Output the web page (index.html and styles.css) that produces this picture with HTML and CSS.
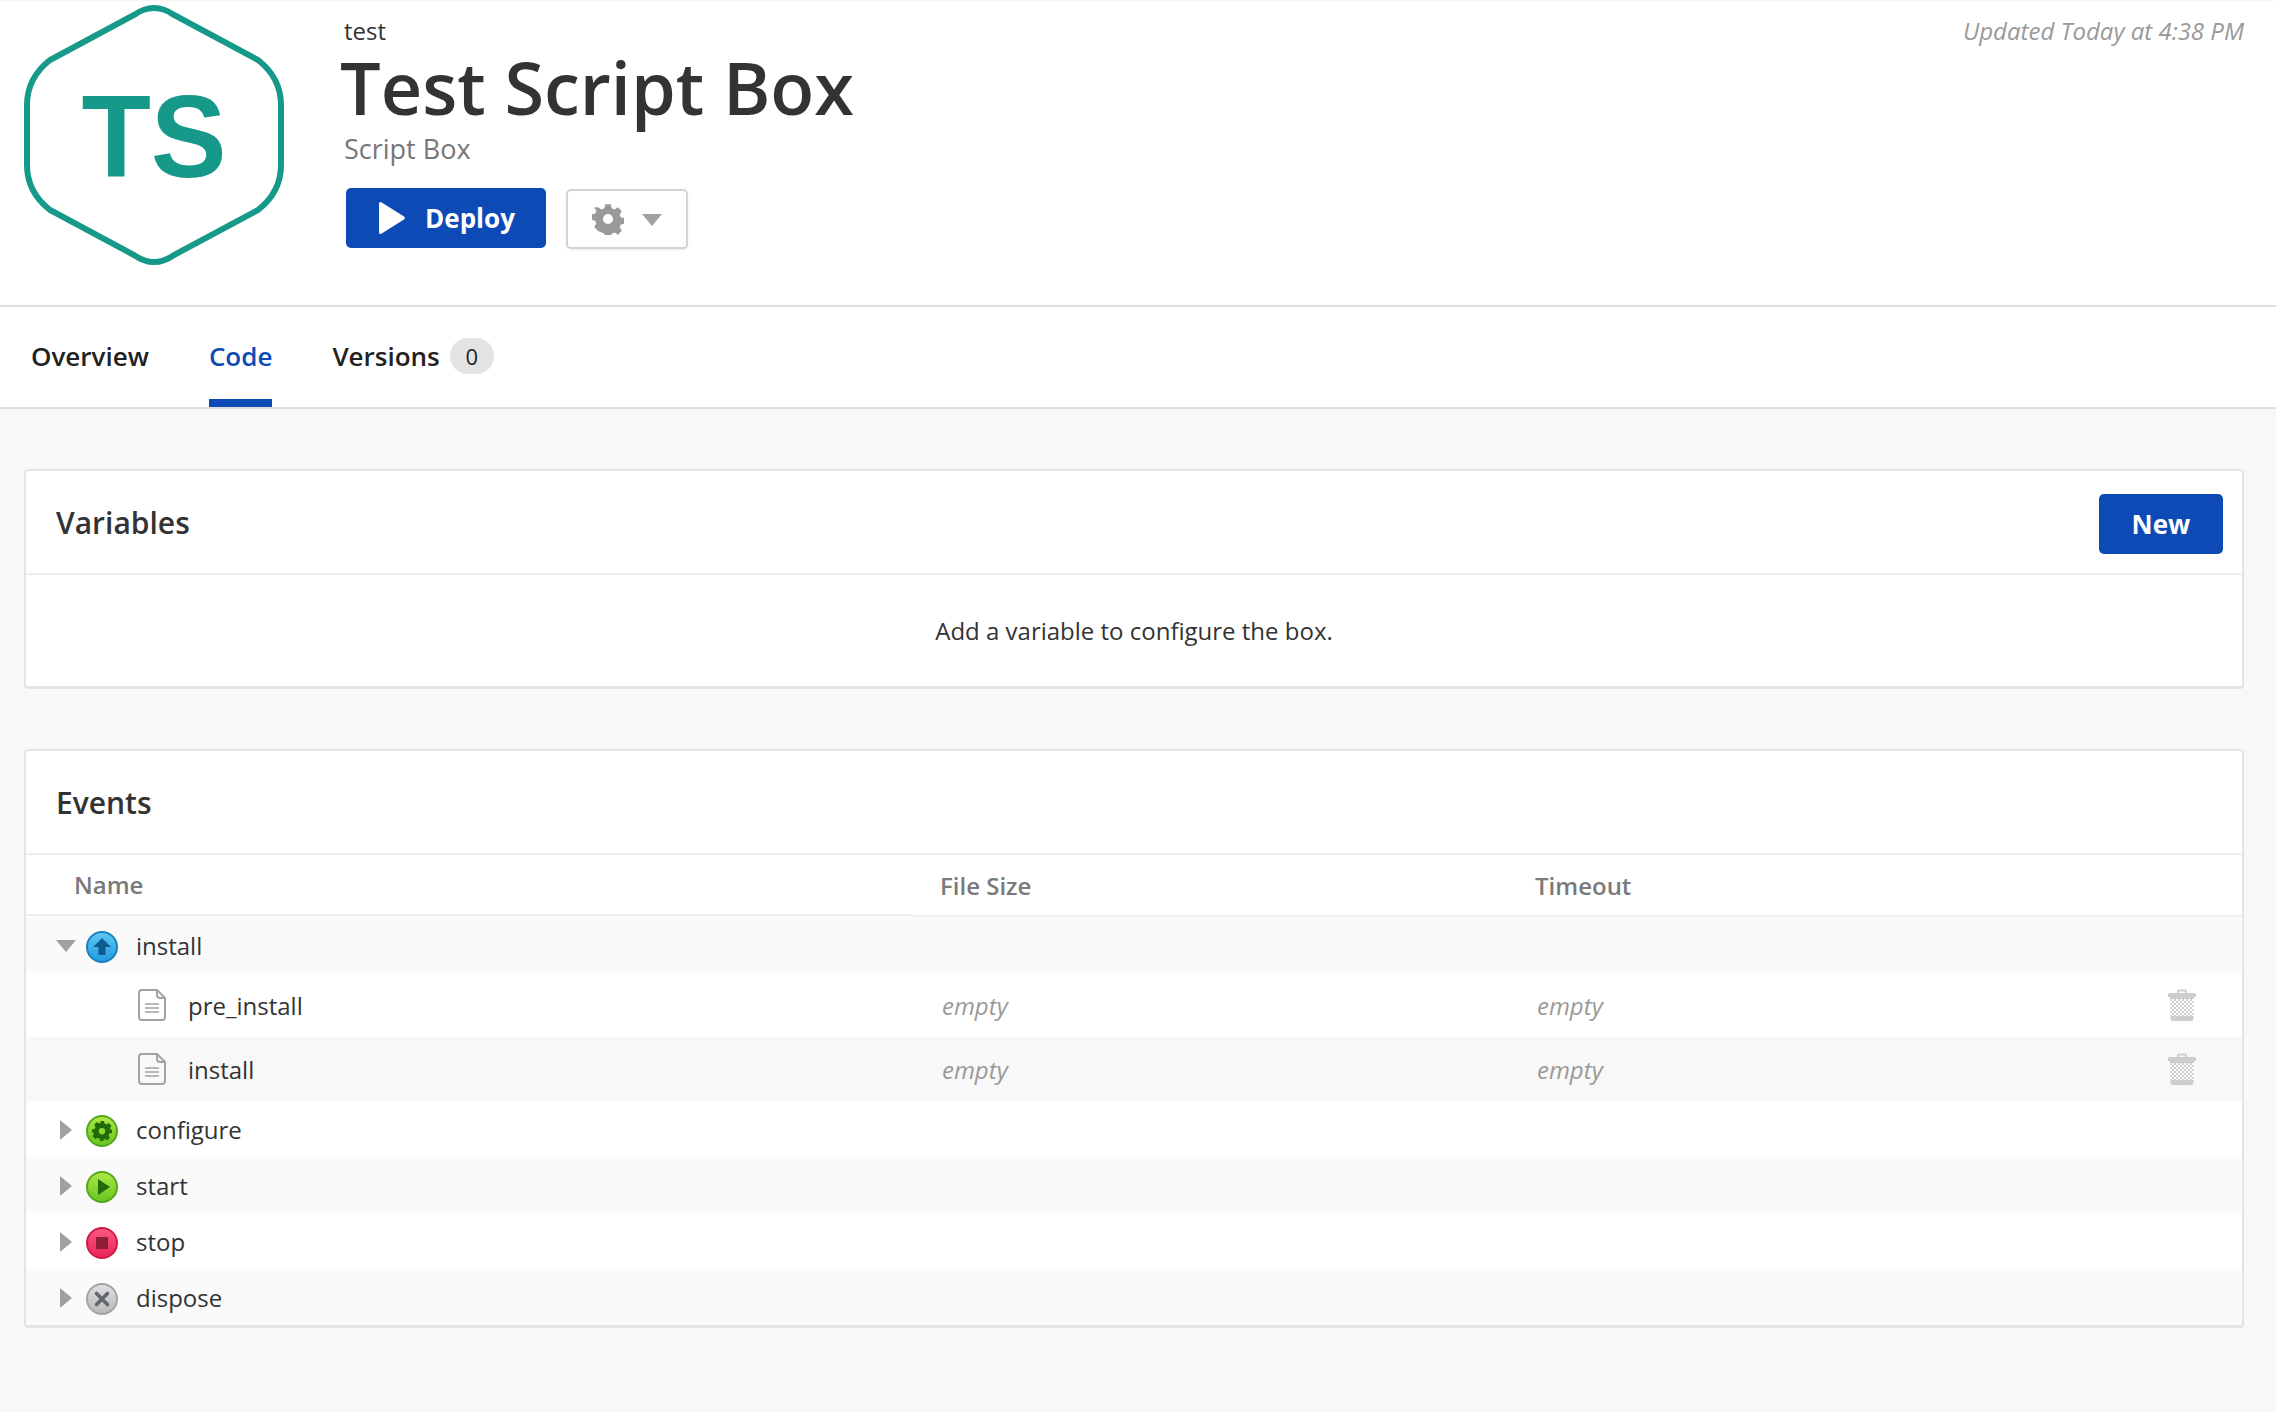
FILE: index.html
```html
<!DOCTYPE html>
<html lang="en">
<head>
<meta charset="utf-8">
<title>Test Script Box</title>
<link rel="stylesheet" href="styles.css">
</head>
<body>
<svg class="defs" width="0" height="0" aria-hidden="true">
  <defs>
    <linearGradient id="g-blue" x1="0" y1="0" x2="0" y2="1"><stop offset="0" stop-color="#62c8f4"/><stop offset="1" stop-color="#1f9ade"/></linearGradient>
    <linearGradient id="g-green" x1="0" y1="0" x2="0" y2="1"><stop offset="0" stop-color="#aee846"/><stop offset="1" stop-color="#66c41f"/></linearGradient>
    <linearGradient id="g-red" x1="0" y1="0" x2="0" y2="1"><stop offset="0" stop-color="#fa5a82"/><stop offset="1" stop-color="#ea2454"/></linearGradient>
    <linearGradient id="g-grey" x1="0" y1="0" x2="0" y2="1"><stop offset="0" stop-color="#e0e0e0"/><stop offset="1" stop-color="#b8b8b8"/></linearGradient>
    <pattern id="dither" width="4" height="4" patternUnits="userSpaceOnUse"><rect width="2" height="2" fill="#cdcdcd"/><rect x="2" y="2" width="2" height="2" fill="#cdcdcd"/></pattern>
    <symbol id="doc" viewBox="0 0 28 32"><path d="M4 1h15l8 8v19a3 3 0 0 1-3 3H4a3 3 0 0 1-3-3V4a3 3 0 0 1 3-3z" fill="none" stroke="#a3a3a3" stroke-width="2"/><path d="M19 1v5a3 3 0 0 0 3 3h5" fill="none" stroke="#a3a3a3" stroke-width="2"/><path d="M7 15h14M7 19h14M7 23h14" stroke="#a3a3a3" stroke-width="1.6"/></symbol>
    <symbol id="trash" viewBox="0 0 28 32"><path d="M9 4V2a1.500 1.500 0 0 1 1.500-1.500h7A1.500 1.500 0 0 1 19 2v2h7.500a1.500 1.500 0 0 1 1.500 1.500V8H0V5.500A1.500 1.500 0 0 1 1.500 4zM11 4h6V2.500h-6z" fill="#cdcdcd" fill-rule="evenodd"/><rect x="2" y="8" width="24" height="2" fill="#cdcdcd"/><rect x="2.500" y="10" width="23" height="18" fill="url(#dither)"/><path d="M2.500 27h23v3a2 2 0 0 1-2 2h-19a2 2 0 0 1-2-2z" fill="#cdcdcd"/></symbol>
    <symbol id="caret-right" viewBox="0 0 12 20"><path d="M0 0l12 10L0 20z" fill="#a0a0a0"/></symbol>
    <symbol id="caret-down" viewBox="0 0 20 12"><path d="M0 0h20L10 12z" fill="#a0a0a0"/></symbol>
  </defs>
</svg>

<header class="page-head">
  <svg class="logo" viewBox="0 0 308 270" width="308" height="270">
    <path class="logo-hex" d="M134 15Q154 1 174 15L258 60Q281 78 281 105V165Q281 192 258 210L174 255Q154 269 134 255L50 210Q27 192 27 165V105Q27 78 50 60z"/>
    <text class="logo-text" transform="translate(154 177) scale(.98 1)" text-anchor="middle">TS</text>
  </svg>
  <div class="head-main">
    <div class="crumb">test</div>
    <h1 class="title">Test Script Box</h1>
    <div class="subtitle">Script Box</div>
    <div class="actions">
      <button class="btn btn-deploy">
        <svg class="deploy-icon" viewBox="0 0 28 32" width="28" height="32"><path d="M2 1.500a1.500 1.500 0 0 1 2.300-1.200L27 14.500a2 2 0 0 1 0 3L4.300 31.700A1.500 1.500 0 0 1 2 30.500z" fill="#fff"/></svg>
        Deploy
      </button>
      <button class="btn-gear" aria-label="Settings">
        <svg viewBox="0 0 32 32" width="32" height="32"><path fill="#999" fill-rule="evenodd" d="M13 0h6l1 4.300 3 1.300 3.800-2.300 4.200 4.200-2.300 3.800 1.300 3 4 .7v6l-4 1-1.300 3 2.300 3.800-4.200 4.200-3.800-2.300-3 1.300-1 4h-6l-1-4-3-1.300L5.200 29.000 1 24.800l2.300-3.800-1.300-3L-2 17v-6l4-.7 1.300-3L1 3.500 5.200 3.300 9 5.600l3-1.300zM16 10.500a5.500 5.500 0 1 0 0 11 5.500 5.500 0 0 0 0-11z" transform="translate(1.300 1.300) scale(.92)"/></svg>
        <svg class="gear-caret" width="20" height="12"><use href="#caret-down"/></svg>
      </button>
    </div>
  </div>
  <div class="updated">Updated Today at 4:38 PM</div>
</header>

<nav class="tabs">
  <a class="tab">Overview</a>
  <a class="tab tab-active">Code</a>
  <a class="tab">Versions <span class="badge">0</span></a>
</nav>

<main class="content">
  <section class="card">
    <div class="card-head">
      <h2 class="card-title">Variables</h2>
      <button class="btn btn-new">New</button>
    </div>
    <div class="card-empty">Add a variable to configure the box.</div>
  </section>

  <section class="card">
    <div class="card-head">
      <h2 class="card-title">Events</h2>
    </div>
    <div class="table-head">
      <div class="th th-name">Name</div>
      <div class="th">File Size</div>
      <div class="th">Timeout</div>
    </div>

    <div class="row event alt">
      <svg class="caret-d" width="20" height="12"><use href="#caret-down"/></svg>
      <svg class="ev-icon" viewBox="0 0 32 32" width="32" height="32"><circle cx="16" cy="16" r="15" fill="url(#g-blue)" stroke="#1a80c0" stroke-width="2"/><path d="M16 7l9 9h-5.500v8h-7v-8H7z" fill="#0d5d8c"/></svg>
      <span class="ev-name">install</span>
    </div>
    <div class="row file">
      <div class="file-name"><svg class="doc" width="28" height="32"><use href="#doc"/></svg><span>pre_install</span></div>
      <div class="muted">empty</div>
      <div class="muted">empty</div>
      <svg class="trash" width="28" height="32"><use href="#trash"/></svg>
    </div>
    <div class="row file alt-2">
      <div class="file-name"><svg class="doc" width="28" height="32"><use href="#doc"/></svg><span>install</span></div>
      <div class="muted">empty</div>
      <div class="muted">empty</div>
      <svg class="trash" width="28" height="32"><use href="#trash"/></svg>
    </div>
    <div class="row event">
      <svg class="caret-r" width="12" height="20"><use href="#caret-right"/></svg>
      <svg class="ev-icon" viewBox="0 0 32 32" width="32" height="32"><circle cx="16" cy="16" r="15" fill="url(#g-green)" stroke="#55a81c" stroke-width="2"/><path fill="#1f6b09" fill-rule="evenodd" d="M14 6h4l.6 2.600 1.800.8 2.300-1.400 2.800 2.800-1.400 2.300.8 1.800L26 14.500v3.500l-2.700.6-.8 1.800 1.400 2.300-2.800 2.800-2.300-1.400-1.800.8L18 26h-4l-.6-2.500-1.800-.8-2.300 1.400-2.800-2.800 1.400-2.300-.8-1.800L6 18v-3.500l2.700-.6.8-1.800-1.400-2.300 2.800-2.800 2.300 1.400 1.800-.8zM16 13a3.200 3.200 0 1 0 0 6.400 3.200 3.200 0 0 0 0-6.400z"/></svg>
      <span class="ev-name">configure</span>
    </div>
    <div class="row event alt">
      <svg class="caret-r" width="12" height="20"><use href="#caret-right"/></svg>
      <svg class="ev-icon" viewBox="0 0 32 32" width="32" height="32"><circle cx="16" cy="16" r="15" fill="url(#g-green)" stroke="#55a81c" stroke-width="2"/><path d="M12 8l12 8-12 8z" fill="#1f6b09"/></svg>
      <span class="ev-name">start</span>
    </div>
    <div class="row event">
      <svg class="caret-r" width="12" height="20"><use href="#caret-right"/></svg>
      <svg class="ev-icon" viewBox="0 0 32 32" width="32" height="32"><circle cx="16" cy="16" r="15" fill="url(#g-red)" stroke="#d01a48" stroke-width="2"/><rect x="10" y="10" width="12" height="12" fill="#8e1f38"/></svg>
      <span class="ev-name">stop</span>
    </div>
    <div class="row event alt">
      <svg class="caret-r" width="12" height="20"><use href="#caret-right"/></svg>
      <svg class="ev-icon" viewBox="0 0 32 32" width="32" height="32"><circle cx="16" cy="16" r="15" fill="url(#g-grey)" stroke="#a4a4a4" stroke-width="2"/><path d="M10.500 10.500l11 11M21.500 10.500l-11 11" stroke="#62666e" stroke-width="3.600" stroke-linecap="round"/></svg>
      <span class="ev-name">dispose</span>
    </div>
  </section>
</main>
</body>
</html>
```

FILE: styles.css
```css
* { box-sizing: border-box; }
html, body { margin: 0; padding: 0; }
body {
  background: #f8f8f8;
  color: #333;
  font-family: "Open Sans", "Noto Sans", sans-serif;
  font-size: 24px;
  height: 1412px;
  overflow: hidden;
}
.defs { position: absolute; }

.page-head {
  display: flex;
  height: 307px;
  background: #fff;
  border-top: 1px solid #f6f6f6;
  border-bottom: 2px solid #dedede;
  padding-right: 32px;
}
.logo { display: block; flex: none; margin-top: -1px; margin-right: 32px; }
.logo-hex { fill: none; stroke: #17998a; stroke-width: 6; }
.logo-text { font-family: "Liberation Sans", Arial, sans-serif; font-weight: 700; font-size: 116px; fill: #17998a; }
.head-main { flex: 1; display: flex; flex-direction: column; align-items: flex-start; }
.crumb { font-size: 24px; line-height: 32px; margin-top: 14px; margin-left: 4px; color: #333; }
.title { margin: 1px 0 0; font-size: 72px; line-height: 78px; font-weight: 600; color: #333; }
.subtitle { font-size: 27px; line-height: 32px; margin-top: 7px; margin-left: 4px; color: #777; }
.actions { display: flex; align-items: flex-start; margin-top: 23px; margin-left: 6px; gap: 20px; }

.btn {
  border: 0;
  border-radius: 5px;
  background: #0d4ab6;
  color: #fff;
  font-family: inherit;
  font-weight: 700;
  font-size: 26px;
  display: flex;
  align-items: center;
  justify-content: center;
}
.btn-deploy { width: 200px; height: 60px; gap: 20px; padding: 0; }
.deploy-icon { flex: none; }
.btn-gear {
  width: 122px;
  height: 60px;
  margin-top: 1px;
  background: #fff;
  border: 2px solid #d4d4d4;
  border-radius: 5px;
  box-shadow: 0 1px 2px rgba(0,0,0,.08);
  display: flex;
  align-items: center;
  justify-content: center;
  gap: 18px;
  padding: 0;
}
.gear-caret { margin-top: 2px; }
.updated { font-style: italic; color: #999; font-size: 24px; line-height: 32px; margin-top: 14px; }

.tabs {
  display: flex;
  gap: 60px;
  height: 102px;
  background: #fff;
  border-bottom: 2px solid #dedede;
  padding-left: 31px;
}
.tab {
  display: flex;
  align-items: center;
  gap: 10px;
  height: 100px;
  font-size: 26px;
  font-weight: 600;
  color: #222;
  padding-top: 10px;
  padding-bottom: 5px;
  border-bottom: 8px solid transparent;
}
.tab-active { color: #0d4ab6; border-bottom-color: #0d4ab6; }
.badge {
  display: inline-flex;
  align-items: center;
  justify-content: center;
  width: 44px;
  height: 36px;
  border-radius: 18px;
  background: #e2e3e5;
  font-size: 22px;
  font-weight: 500;
  color: #222;
}

.content { padding: 60px 32px 0 24px; display: flex; flex-direction: column; gap: 60px; }
.card {
  background: #fff;
  border: 2px solid #e4e4e4;
  border-bottom-width: 3px;
  border-radius: 4px;
  overflow: hidden;
}
.card-head {
  height: 104px;
  border-bottom: 2px solid #eee;
  display: flex;
  align-items: center;
  justify-content: space-between;
  padding: 0 19px 0 30px;
}
.card-title { margin: 0; font-size: 30px; font-weight: 600; color: #333; }
.btn-new { width: 124px; height: 60px; margin-top: 4px; }
.card-empty { height: 111px; display: flex; align-items: center; justify-content: center; font-size: 24px; color: #333; padding-bottom: 1px; }

.table-head { display: grid; grid-template-columns: 886px 595px 1fr; height: 62px; }
.th { font-size: 24px; font-weight: 600; color: #7a7a7a; padding: 14px 0 0 28px; border-bottom: 2px solid #eee; }
.th-name { padding: 13px 0 0 48px; height: 61px; }

.row { background: #fff; font-size: 24px; color: #333; }
.alt { background: #fafafa; }
.alt-2 { background: #f8f8f8; }
.event { display: flex; align-items: center; height: 56px; position: relative; }
.caret-d { margin-left: 30px; margin-right: 10px; margin-top: 2px; flex: none; }
.caret-r { margin-left: 34px; margin-right: 14px; margin-top: 2px; flex: none; }
.ev-icon { flex: none; margin-right: 18px; margin-top: 4px; }
.file { display: grid; grid-template-columns: 888px 595px 1fr 28px; align-items: center; height: 64px; padding-right: 46px; }
.file-name { display: flex; align-items: center; gap: 22px; padding-left: 112px; }
.doc { flex: none; }
.muted { font-style: italic; color: #999; padding-left: 28px; }
.trash { display: block; }
```
